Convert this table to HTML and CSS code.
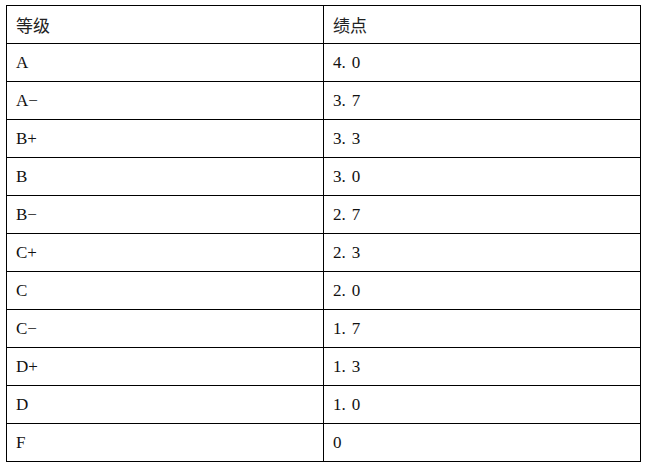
FILE: index.html
```html
<!DOCTYPE html>
<html lang="zh-CN">
<head>
<meta charset="utf-8">
<title>等级绩点</title>
<link rel="stylesheet" href="styles.css">
</head>
<body>
<table class="grades">
  <colgroup><col class="c1"><col class="c2"></colgroup>
  <thead>
    <tr><th>等级</th><th>绩点</th></tr>
  </thead>
  <tbody>
    <tr><td>A</td><td>4<span class="dot">.</span>0</td></tr>
    <tr><td>A−</td><td>3<span class="dot">.</span>7</td></tr>
    <tr><td>B+</td><td>3<span class="dot">.</span>3</td></tr>
    <tr><td>B</td><td>3<span class="dot">.</span>0</td></tr>
    <tr><td>B−</td><td>2<span class="dot">.</span>7</td></tr>
    <tr><td>C+</td><td>2<span class="dot">.</span>3</td></tr>
    <tr><td>C</td><td>2<span class="dot">.</span>0</td></tr>
    <tr><td>C−</td><td>1<span class="dot">.</span>7</td></tr>
    <tr><td>D+</td><td>1<span class="dot">.</span>3</td></tr>
    <tr><td>D</td><td>1<span class="dot">.</span>0</td></tr>
    <tr><td>F</td><td>0</td></tr>
  </tbody>
</table>
</body>
</html>
```
FILE: styles.css
```css
html, body {
  margin: 0;
  background: #ffffff;
}
body {
  padding: 5px 6px;
}
.grades {
  border-collapse: collapse;
  width: 635px;
  table-layout: fixed;
  color: #111;
}
.c1 { width: 317px; }
.grades th,
.grades td {
  border: 1px solid #000;
  height: 38px;
  padding: 0 9px;
  text-align: left;
  vertical-align: middle;
  box-sizing: border-box;
}
.grades th {
  font-family: "Noto Sans CJK SC", sans-serif;
  font-weight: normal;
  font-size: 17px;
  color: #222;
}
.grades td {
  font-family: "Liberation Serif", "Noto Sans CJK SC", serif;
  font-size: 17px;
  padding-top: 1px;
}
.grades .dot {
  margin-right: 6px;
}
```
